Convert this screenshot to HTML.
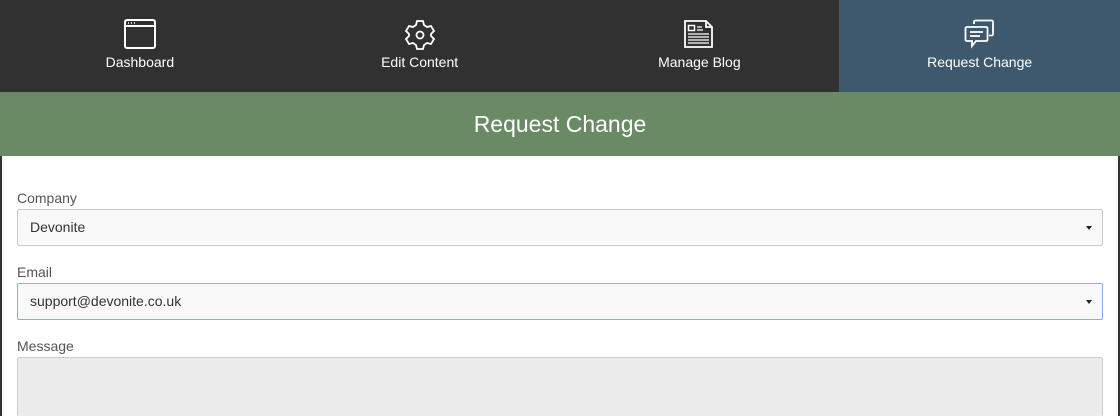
<!DOCTYPE html>
<html style="overflow:hidden;height:416px"><head><style>
body{margin:0;width:1120px;height:416px;overflow:hidden;background:#333;font-family:"Liberation Sans",sans-serif;position:relative}
.nav{height:92px;display:flex;background:#313131;}
.tab{width:280px;position:relative;color:#fff;text-align:center;font-size:14px;}
.tab.a{background:#3e596d;width:281px}
.tab svg{position:absolute;left:50%;top:19px;transform:translateX(-50%)}
.tab span{position:absolute;left:0;right:0;top:54px}
.hdr{height:64px;background:#6a8a66;color:#fff;font-size:23px;text-align:center;line-height:64px;}
.main{position:absolute;left:2px;right:2px;top:156px;height:260px;overflow:hidden;background:#fff}
.lbl{position:absolute;left:15px;font-size:14px;color:#555}
.inp{position:absolute;left:15px;height:35px;border:1px solid #ccc;background:#f9f9f9;font-size:14px;color:#333;line-height:35px;padding-left:12px;width:1072px;border-radius:2px}
.arr{position:absolute;right:10px;top:16px;border-left:3px solid transparent;border-right:3px solid transparent;border-top:4px solid #222}
</style></head><body>
<div class="nav">
<div class="tab"><svg width="32" height="30" viewBox="0 0 32 30" fill="none" stroke="#fff" stroke-width="2"><rect x="1" y="1" width="30" height="28" rx="2"/><line x1="1" y1="7" x2="31" y2="7"/><g stroke-width="1.4"><line x1="4" y1="4" x2="5" y2="4"/><line x1="7" y1="4" x2="8" y2="4"/><line x1="10" y1="4" x2="11" y2="4"/></g></svg><span>Dashboard</span></div>
<div class="tab"><svg width="32" height="32" viewBox="0 0 32 32" fill="none" stroke="#fff" stroke-width="1.8"><path d="M13 2h6l1 4 3 2 4-1 3 5-3 3v2l3 3-3 5-4-1-3 2-1 4h-6l-1-4-3-2-4 1-3-5 3-3v-2l-3-3 3-5 4 1 3-2z"/><circle cx="16" cy="16" r="3.5"/></svg><span>Edit Content</span></div>
<div class="tab"><svg width="32" height="30" viewBox="0 0 32 30" fill="none" stroke="#fff" stroke-width="1.8"><path d="M2 2h21l6 6v20H2z"/><path d="M23 2v6h6"/><rect x="5.5" y="6.5" width="6" height="5" stroke-width="1.5"/><g stroke-width="1.3"><line x1="14" y1="8" x2="19" y2="8"/><line x1="14" y1="11" x2="20" y2="11"/><line x1="5" y1="15" x2="26" y2="15"/><line x1="5" y1="18" x2="26" y2="18"/><line x1="5" y1="21" x2="26" y2="21"/><line x1="5" y1="24" x2="26" y2="24"/></g></svg><span>Manage Blog</span></div>
<div class="tab a"><svg width="32" height="30" viewBox="0 0 32 30" fill="none" stroke="#fff" stroke-width="1.8"><path d="M10 5V3q0-1.5 1.5-1.5h16q1.5 0 1.5 1.5v12q0 1.5-1.5 1.5H25"/><path d="M3 8h19q1.5 0 1.5 1.5v11q0 1.5-1.5 1.5H12l-4 5v-5H3q-1.5 0-1.5-1.5v-11Q1.5 8 3 8z"/><line x1="6" y1="13" x2="19" y2="13"/><line x1="6" y1="17" x2="16" y2="17"/></svg><span>Request Change</span></div>
</div>
<div class="hdr">Request Change</div>
<div class="main">
<div class="lbl" style="top:34px">Company</div>
<div class="inp" style="top:53px">Devonite<div class="arr"></div></div>
<div class="lbl" style="top:108px">Email</div>
<div class="inp" style="top:127px;border-color:#8aacf0">support@devonite.co.uk<div class="arr"></div></div>
<div class="lbl" style="top:182px">Message</div>
<div class="inp" style="top:201px;height:58px;border-bottom:none;background:#ebebeb"></div>
</div>
</body></html>
